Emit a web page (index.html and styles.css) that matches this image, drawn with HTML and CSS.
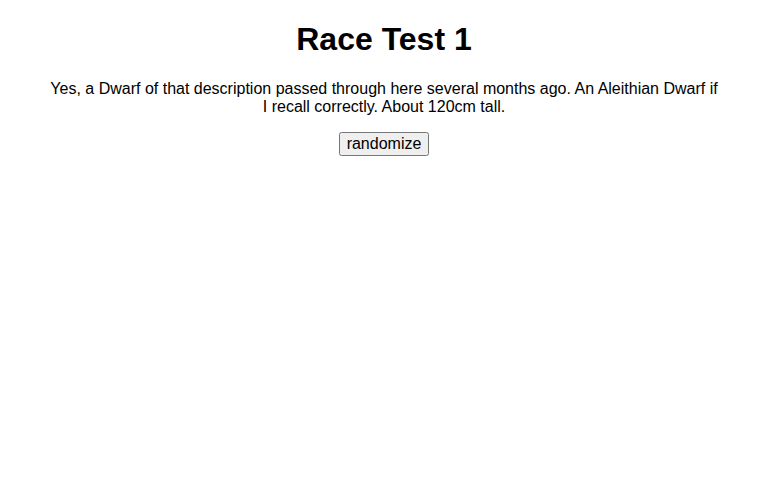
FILE: index.html
```html
<!DOCTYPE html>
<html lang="en">
<head>
<meta charset="utf-8">
<title>Race Test 1</title>
<link rel="stylesheet" href="styles.css">
</head>
<body>
<main class="page">
<h1 class="title">Race Test 1</h1>
<p class="description">Yes, a Dwarf of that description passed through here several months ago. An Aleithian Dwarf if I recall correctly. About 120cm tall.</p>
<button class="randomize" type="button">randomize</button>
</main>
</body>
</html>
```

FILE: styles.css
```css
body {
  margin: 0;
  background: #fff;
  color: #000;
  font-family: "Liberation Sans", Arial, sans-serif;
  font-size: 16px;
}

.page {
  max-width: 670px;
  margin: 0 auto;
  text-align: center;
}

.title {
  margin: 21px 0 22px;
  font-size: 32px;
}

.description {
  margin: 0 0 16px;
}

.randomize {
  font: inherit;
}
```
